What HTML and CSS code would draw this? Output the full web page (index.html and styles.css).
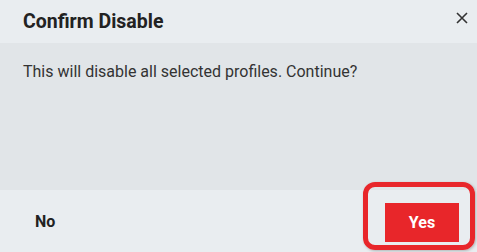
FILE: index.html
```html
<!DOCTYPE html>
<html>
<head>
<meta charset="utf-8">
<link rel="stylesheet" href="styles.css">
</head>
<body>
<div class="dialog">
  <div class="header">
    <h1 class="title">Confirm Disable</h1>
    <button class="close" aria-label="Close">
      <svg width="12" height="12" viewBox="0 0 12 12"><path d="M1 1L11 11M11 1L1 11" stroke="#333" stroke-width="1.6" fill="none"/></svg>
    </button>
  </div>
  <div class="content">
    <p class="message">This will disable all selected profiles. Continue?</p>
  </div>
  <div class="footer">
    <button class="btn-no">No</button>
    <div class="yes-wrap">
      <button class="btn-yes">Yes</button>
      <span class="highlight"></span>
    </div>
  </div>
</div>
</body>
</html>
```
FILE: styles.css
```css
html, body {
  margin: 0;
  padding: 0;
}
body {
  width: 477px;
  height: 252px;
  overflow: hidden;
  font-family: Roboto, "Liberation Sans", sans-serif;
  background: #e9edf0;
}
.dialog {
  display: flex;
  flex-direction: column;
  height: 252px;
}
.header {
  height: 43px;
  background: #e9edf0;
  display: flex;
  align-items: center;
  justify-content: space-between;
  padding: 0 9px 0 23px;
}
.title {
  margin: 0;
  font-size: 19.5px;
  font-weight: 700;
  color: #222;
}
.close {
  border: 0;
  background: transparent;
  padding: 0;
  width: 12px;
  height: 12px;
  margin-bottom: 7px;
  display: flex;
}
.content {
  height: 147px;
  background: #e1e5e8;
  padding: 0 23px;
  box-sizing: border-box;
}
.message {
  margin: 19px 0 0 0;
  font-size: 16px;
  color: #333;
}
.footer {
  height: 62px;
  background: #e9edf0;
  display: flex;
  align-items: center;
  justify-content: space-between;
  padding: 0 18px 0 35px;
}
.btn-no {
  border: 0;
  background: transparent;
  padding: 0;
  font-family: inherit;
  font-size: 16px;
  font-weight: 700;
  color: #222;
}
.yes-wrap {
  position: relative;
  margin-top: 3px;
}
.btn-yes {
  width: 74px;
  height: 39px;
  border: 0;
  background: #e8262a;
  color: #fff;
  font-family: inherit;
  font-size: 16px;
  font-weight: 700;
  display: block;
}
.highlight {
  position: absolute;
  left: -22px;
  top: -21px;
  right: -16px;
  bottom: -8px;
  border: 5px solid #e8262a;
  border-radius: 12px;
  box-sizing: border-box;
  box-shadow: 1px 1px 3px rgba(0,0,0,0.25);
}
```
